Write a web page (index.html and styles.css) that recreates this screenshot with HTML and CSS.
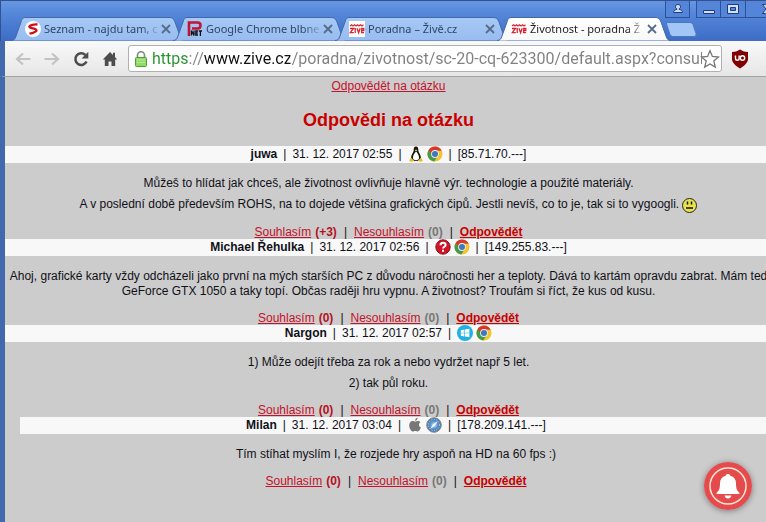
FILE: index.html
```
<!DOCTYPE html>
<html lang="cs">
<head>
<meta charset="utf-8">
<title>Životnost - poradna Živě.cz</title>
<link rel="stylesheet" href="styles.css">
</head>
<body>
<svg class="defs" aria-hidden="true">
  <defs>
    <linearGradient id="tab-idle" x2="0" y2="1"><stop offset="0" stop-color="#a6c9f5"/><stop offset="1" stop-color="#98bcf0"/></linearGradient>
    <linearGradient id="tab-active" x2="0" y2="1"><stop offset="0" stop-color="#fff"/><stop offset="1" stop-color="#f8f8f8"/></linearGradient>
    <radialGradient id="globe"><stop offset="0" stop-color="#a9d6f5"/><stop offset=".7" stop-color="#437fbf"/><stop offset="1" stop-color="#6b7c91"/></radialGradient>
    <symbol id="shape-tab" viewBox="0 0 174 24"><path d="M0 23.5C3 23.5 4 22 5 19L10 5C11 1.500 12 .5 15 .5H158C161 .5 162.500 1.500 164 5L169 19C170 22 171 23.500 174 23.500" stroke="#4168a8"/></symbol>
    <symbol id="x" viewBox="0 0 10 10"><path d="M1 1l8 8M9 1l-8 8" fill="none" stroke="currentColor" stroke-width="1.800"/></symbol>
    <symbol id="zive" viewBox="0 0 16 16"><path fill="#fff" d="M0 0h16v16H0z"/><path d="M1 5l1.500-1.200L4 5l1.500-1.200L7 5l1.500-1.200L10 5l1.500-1.200L13 5l1.500-1.200" fill="none" stroke="#d8232f" stroke-width="1.200"/><path d="M1 7.500h3.500L1.300 11.700h3.500M6.200 7v5M8 7.200l1.600 4.500 1.600-4.500M15 11.700h-2.300V7.500h2.100v2h-2" fill="none" stroke="#d8232f" stroke-width="1.300"/></symbol>
    <symbol id="chrome" viewBox="0 0 16 16"><circle cx="8" cy="8" r="7.500" fill="#f2c52d"/><path d="M1.500 4.200A7.500 7.500 0 0 1 14.700 4.700H8L4.900 9.500z" fill="#d6382d"/><path d="M1.500 4.200A7.500 7.500 0 0 0 7.300 15.500L10.900 9.800 7 11z" fill="#459b48"/><circle cx="8" cy="8" r="3.900" fill="#e9eef0"/><circle cx="8" cy="8" r="3" fill="#3f78bc"/></symbol>
    <symbol id="linux" viewBox="0 0 16 16"><path d="M8 .5C5.800.5 5.600 2.500 5.700 4.500 5.600 6.500 3 8.500 3 12c0 2 2 3 5 3s5-1 5-3c0-3.500-2.600-5.500-2.700-7.500C10.400 2.500 10.200.5 8 .5z" fill="#171717"/><path d="M7.500 6C6 8 5 9.500 5 12c0 1.500 1.500 2.200 3 2.200s3-.7 3-2.200c0-2.500-1-4-2.300-6z" fill="#fff"/><path d="M6.700 4.200L8 3.600l1.400.6L8 5.700z" fill="#edb91f"/><path d="M3 11.500l3 3c-.3 1.500-2.800 1.200-4.800.4zM13 11.500l-3 3c.3 1.500 2.800 1.200 4.800.4z" fill="#edb91f"/></symbol>
    <symbol id="unknown" viewBox="0 0 16 16"><circle cx="8" cy="8" r="7.200" fill="#cf1428" stroke="#8e1021"/><path d="M5.500 6.200C5.500 4.300 6.500 3.700 8 3.700s2.600.8 2.600 2.200C10.600 7.800 8 7.700 8 9.600" fill="none" stroke="#fff" stroke-width="2"/><path d="M7 10.800h2v2H7z" fill="#fff"/></symbol>
    <symbol id="windows" viewBox="0 0 16 16"><circle cx="8" cy="8" r="8" fill="#1fb0e6"/><path d="M3.800 5.200l3.600-.6v3.100H3.800zM8 4.500l4.400-.7v3.900H8zM3.800 8.300h3.600v3.100l-3.600-.6zM8 8.300h4.400v3.900L8 11.500z" fill="#fff"/></symbol>
    <symbol id="apple" viewBox="0 0 16 16"><path d="M10.600.8c.1 1.500-1 2.900-2.500 3C8 2.300 9.200 1 10.600.8zM8.300 4.700c.8 0 1.500-.7 2.700-.7 1 0 1.900.5 2.500 1.300-2.300 1.300-1.900 4.300.4 5.200-.6 1.700-1.900 4-3.200 4-.9 0-1.300-.6-2.400-.6s-1.500.6-2.400.6C4.200 14.500 2.200 11 2.200 8.400 2.200 5.700 3.900 4 5.700 4c1.100 0 1.900.7 2.600.7z" fill="#777"/></symbol>
    <symbol id="safari" viewBox="0 0 16 16"><circle cx="8" cy="8" r="7.300" fill="url(#globe)" stroke="#7c8793"/><circle cx="8" cy="8" r="5.500" fill="none" stroke="#cbe3f4" stroke-dasharray="1 1.500"/><path d="M12 4L9 9 4 12l3-5z" fill="#e8f2fa"/></symbol>
  </defs>
</svg>

<header class="browser">
  <div class="titlebar">
    <ul class="tabs">
      <li class="tab">
        <svg class="tab-shape"><use href="#shape-tab"/></svg>
        <svg class="favicon" viewBox="0 0 16 16"><circle cx="8" cy="8" r="8" fill="#fff"/><path d="M12.500 3.500C9 3.200 4.800 4 4.300 5.400 4 7.500 11.300 7.300 11.500 9.300 11.500 11 8 12 4.500 12.700" fill="none" stroke="#d40d14" stroke-width="2.300"/></svg>
        <a class="tab-title" href="#">Seznam - najdu tam, c</a>
        <button class="tab-close" aria-label="Zavřít"><svg><use href="#x"/></svg></button>
      </li>
      <li class="tab">
        <svg class="tab-shape"><use href="#shape-tab"/></svg>
        <svg class="favicon" viewBox="0 0 16 16"><path d="M2 15V1.500h8.500q3 0 3 3t-3 3H5" fill="none" stroke="#c41230" stroke-width="2.600"/><path d="M4.500 14.500v-5l2.500 5v-5M11 10H8.800v4H11M8.800 12h2M11.800 10H15M13.400 10v5" fill="none" stroke="#111" stroke-width="1.300"/></svg>
        <a class="tab-title" href="#">Google Chrome blbne.</a>
        <button class="tab-close" aria-label="Zavřít"><svg><use href="#x"/></svg></button>
      </li>
      <li class="tab">
        <svg class="tab-shape"><use href="#shape-tab"/></svg>
        <svg class="favicon"><use href="#zive"/></svg>
        <a class="tab-title" href="#">Poradna – Živě.cz</a>
        <button class="tab-close" aria-label="Zavřít"><svg><use href="#x"/></svg></button>
      </li>
      <li class="tab tab-current">
        <svg class="tab-shape"><use href="#shape-tab"/></svg>
        <svg class="favicon"><use href="#zive"/></svg>
        <a class="tab-title" href="#">Životnost - poradna Ž</a>
        <button class="tab-close" aria-label="Zavřít"><svg><use href="#x"/></svg></button>
      </li>
    </ul>
    <button class="new-tab" aria-label="Nová karta"><svg viewBox="0 0 31 15"><path d="M1.500.5H24q2 0 3 2l3 9q1 3-2 3H7q-2 0-3-2L.8 3Q0 .5 1.500.5z" fill="#a2c7f7" stroke="#4a78c0"/></svg></button>
    <div class="window-controls">
      <button class="control user" aria-label="Uživatel"><svg viewBox="0 0 12 12"><path d="M6 1.500a2.200 2.200 0 0 1 1.200 4.200v.8c2 .4 3.300 1.200 3.300 3H1.500c0-1.800 1.300-2.600 3.300-3v-.8A2.200 2.200 0 0 1 6 1.500z"/></svg></button>
      <button class="control" aria-label="Minimalizovat"><svg viewBox="0 0 12 12"><path d="M.5 7.500h11v3H.5z"/></svg></button>
      <button class="control" aria-label="Obnovit"><svg viewBox="0 0 12 12"><path d="M.5 1.500h11v9H.5zM3.500 4.500v3h5v-3z" fill-rule="evenodd"/></svg></button>
      <button class="control close" aria-label="Zavřít okno"><svg viewBox="0 0 12 12"><path d="M.5 1.500h3L6 4l2.500-2.500h3L8 6l3.500 4.500h-3L6 8l-2.500 2.500h-3L4 6z"/></svg></button>
    </div>
  </div>
  <nav class="toolbar">
    <button class="tool faded" aria-label="Zpět"><svg viewBox="0 0 16 16"><path d="M15.500 8H2M8 2.500L2 8l6 5.500" fill="none" stroke="currentColor" stroke-width="2.200"/></svg></button>
    <button class="tool faded" aria-label="Vpřed"><svg viewBox="0 0 16 16"><path d="M.5 8H14M8 2.500L14 8l-6 5.500" fill="none" stroke="currentColor" stroke-width="2.200"/></svg></button>
    <button class="tool" aria-label="Obnovit stránku"><svg viewBox="0 0 16 16"><path d="M12.300 4A5.800 5.800 0 1 0 13.500 10.500" fill="none" stroke="currentColor" stroke-width="2.600"/><path d="M15.300.8v6.700H8.600z" fill="currentColor"/></svg></button>
    <button class="tool" aria-label="Domů"><svg viewBox="0 0 16 16"><path d="M8 1L.8 8.500h2V15h3.700v-4.500h3V15h3.700V8.500h2L13 6V1.800h-2V4z" fill="currentColor"/></svg></button>
    <div class="address">
      <svg class="lock" viewBox="0 0 12 16"><path d="M2.500 7V4.200a3.500 3.500 0 0 1 7 0V7" fill="none" stroke="#7d8a7d" stroke-width="1.600"/><rect x=".5" y="6.500" width="11" height="9" rx="1" fill="#8fdb6a" stroke="#4c9e35"/><path d="M2 9h8M2 11.500h8" stroke="#b6eb9a"/></svg>
      <input class="url" type="text" aria-label="Adresa" spellcheck="false" value="https://www.zive.cz/poradna/zivotnost/sc-20-cq-623300/default.aspx?consul">
      <button class="star" aria-label="Záložka"><svg viewBox="0 0 20 20"><path d="M10 1.800l2.400 5.700 6.100.5-4.700 4 1.500 6.100L10 14.900l-5.300 3.200L6.200 12 1.500 8l6.100-.5z" fill="#fff" stroke="#777" stroke-width="1.300"/></svg></button>
    </div>
    <button class="shield" aria-label="uBlock"><svg viewBox="0 0 18 20"><path d="M9 .5c2.500 1.700 5 2.500 8 2.500v7c0 4-4 7-8 9.500C5 17 1 14 1 10V3C4 3 6.500 2.200 9 .5z" fill="#800000"/><path d="M4.500 6.500v3a1.800 1.800 0 0 0 3.600 0v-3" fill="none" stroke="#fff" stroke-width="1.400"/><circle cx="11.500" cy="9" r="2.200" fill="none" stroke="#fff" stroke-width="1.400"/></svg></button>
  </nav>
</header>

<main class="viewport">
  <div class="page">
    <p class="reply-top"><a href="#">Odpovědět na otázku</a></p>
    <h1>Odpovědi na otázku</h1>

    <article class="post">
      <div class="author"><b>juwa</b><i>|</i><span>31. 12. 2017 02:55</span><i>|</i><svg><use href="#linux"/></svg><svg><use href="#chrome"/></svg><i>|</i><span>[85.71.70.---]</span></div>
      <div class="text">
        <p>Můžeš to hlídat jak chceš, ale životnost ovlivňuje hlavně výr. technologie a použité materiály.</p>
        <p>A v poslední době především ROHS, na to dojede většina grafických čipů. Jestli nevíš, co to je, tak si to vygoogli. <svg class="smile" viewBox="0 0 15 15"><circle cx="7.500" cy="7.500" r="7" fill="#e9e34a" stroke="#222"/><path d="M5.500 3.500v3M9.500 3.500v3M4 10h7" stroke="#111" stroke-width="1.500"/></svg></p>
      </div>
      <div class="actions"><a href="#">Souhlasím</a><b class="plus">(+3)</b><i>|</i><a href="#">Nesouhlasím</a><b class="minus">(0)</b><i>|</i><a class="answer" href="#">Odpovědět</a></div>
    </article>

    <article class="post">
      <div class="author"><b>Michael Řehulka</b><i>|</i><span>31. 12. 2017 02:56</span><i>|</i><svg><use href="#unknown"/></svg><svg><use href="#chrome"/></svg><i>|</i><span>[149.255.83.---]</span></div>
      <div class="text">
        <p>Ahoj, grafické karty vždy odcházeli jako první na mých starších PC z důvodu náročnosti her a teploty. Dává to kartám opravdu zabrat. Mám ted<br>GeForce GTX 1050 a taky topí. Občas raději hru vypnu. A životnost? Troufám si říct, že kus od kusu.</p>
      </div>
      <div class="actions"><a href="#">Souhlasím</a><b class="plus">(0)</b><i>|</i><a href="#">Nesouhlasím</a><b class="minus">(0)</b><i>|</i><a class="answer" href="#">Odpovědět</a></div>
    </article>

    <article class="post">
      <div class="author"><b>Nargon</b><i>|</i><span>31. 12. 2017 02:57</span><i>|</i><svg><use href="#windows"/></svg><svg><use href="#chrome"/></svg></div>
      <div class="text">
        <p>1) Může odejít třeba za rok a nebo vydržet např 5 let.</p>
        <p>2) tak půl roku.</p>
      </div>
      <div class="actions"><a href="#">Souhlasím</a><b class="plus">(0)</b><i>|</i><a href="#">Nesouhlasím</a><b class="minus">(0)</b><i>|</i><a class="answer" href="#">Odpovědět</a></div>
    </article>

    <article class="post nested">
      <div class="author"><b>Milan</b><i>|</i><span>31. 12. 2017 03:04</span><i>|</i><svg><use href="#apple"/></svg><svg><use href="#safari"/></svg><i>|</i><span>[178.209.141.---]</span></div>
      <div class="text">
        <p>Tím stíhat myslím I, že rozjede hry aspoň na HD na 60 fps :)</p>
      </div>
      <div class="actions"><a href="#">Souhlasím</a><b class="plus">(0)</b><i>|</i><a href="#">Nesouhlasím</a><b class="minus">(0)</b><i>|</i><a class="answer" href="#">Odpovědět</a></div>
    </article>
  </div>
</main>

<button class="bell" aria-label="Oznámení"><svg viewBox="0 0 48 48"><circle cx="24" cy="24" r="24" fill="#e54b4d"/><circle cx="24" cy="24" r="18" fill="none" stroke="#ffe9d6" stroke-width="1.500"/><path d="M24 12c1.500 0 2.200.8 2.300 1.800C30 14.800 32 17.500 32 21c0 6 1 7.500 3.500 10v1h-23v-1C15 28.500 16 27 16 21c0-3.500 2-6.200 5.700-7.200.1-1 .8-1.800 2.300-1.800zM20.500 33.500h7c-.5 2-1.800 3-3.500 3s-3-1-3.500-3z" fill="#fff"/></svg></button>
</body>
</html>
```
FILE: styles.css
```
* {
  box-sizing: border-box;
}

body {
  margin: 0;
  min-height: 100vh;
  display: flex;
  flex-direction: column;
  overflow: hidden;
  background: #ccc;
  font: 12px/15px "Liberation Sans", Arial, sans-serif;
  color: #101018;
}

button {
  margin: 0;
  padding: 0;
  border: 0;
  background: none;
}

svg {
  display: block;
  flex: none;
}

.defs {
  position: absolute;
  width: 0;
  height: 0;
}

/* Window frame */
.titlebar {
  position: relative;
  display: flex;
  align-items: flex-end;
  height: 41px;
  overflow: hidden;
  padding-left: 10px;
  border-top: 1px solid #33518c;
  border-left: 1px solid #33518c;
  background: linear-gradient(#6797e2, #5385d8 35%, #3e6cc6);
}

.tabs {
  display: flex;
  margin: 0;
  padding: 0;
  list-style: none;
}

.tab {
  position: relative;
  display: flex;
  align-items: center;
  width: 174px;
  height: 24px;
  margin-right: -12px;
  padding: 0 14px;
  font: 11px/16px "Noto Sans", Tahoma, sans-serif;
}

.tab-shape {
  position: absolute;
  inset: 0;
  width: 100%;
  height: 100%;
  fill: url(#tab-idle);
}

.tab-current .tab-shape {
  fill: url(#tab-active);
}

.favicon {
  position: relative;
  width: 16px;
  height: 16px;
}

.tab-title {
  position: relative;
  flex: 1;
  margin-left: 3px;
  overflow: hidden;
  white-space: nowrap;
  color: #2f4568;
  text-decoration: none;
  mask-image: linear-gradient(to left, transparent, #000 20px);
}

.tab-current .tab-title {
  color: #222;
}

.tab-close {
  position: relative;
  color: #566b8c;
}

.tab-close svg {
  width: 10px;
  height: 10px;
}

.new-tab {
  margin: 0 0 4px 7px;
}

.new-tab svg {
  width: 31px;
  height: 15px;
}

/* Floats over the tab strip, flush with the top edge */
.window-controls {
  position: absolute;
  top: 0;
  right: -24px;
  display: flex;
}

.control {
  display: grid;
  place-items: center;
  width: 25px;
  height: 17px;
  border: 1px solid #2c519b;
  border-top: 0;
  border-left-width: 0;
  background: #5585d8;
}

.control svg {
  width: 12px;
  height: 12px;
  fill: #cfe0fa;
  stroke: #1f3a78;
}

.control.user {
  border-left-width: 1px;
  margin-right: 6px;
}

.control.user + .control {
  border-left-width: 1px;
}

.control.close {
  width: 44px;
}

/* Navigation bar */
.toolbar {
  display: flex;
  align-items: center;
  height: 36px;
  padding: 0 17px 0 10px;
  border-left: 5px solid #4468ae;
  border-bottom: 1px solid #a3a3a3;
  background: linear-gradient(#f9f9f9, #e6e6e6);
}

.tool {
  margin-right: 13px;
  color: #4d4d4d;
}

.tool.faded {
  color: #c3c3c3;
}

.tool svg {
  width: 16px;
  height: 16px;
}

.address {
  display: flex;
  flex: 1;
  align-items: center;
  min-width: 0;
  height: 27px;
  margin: 0 9px 0 -3px;
  padding: 0 1px 0 6px;
  border: 1px solid #b0b0b0;
  border-radius: 3px;
  background: #fff;
}

.lock {
  width: 12px;
  height: 16px;
}

.url {
  flex: 1;
  min-width: 0;
  height: 25px;
  margin: 0 -2px 0 5px;
  padding: 0;
  border: 0;
  outline: 0;
  background: linear-gradient(to right, #26922a 36px, #858585 36px 52px, #111 52px 138px, #808080 138px);
  background-clip: text;
  -webkit-text-fill-color: transparent;
  font: 16px/25px Roboto, Tahoma, sans-serif;
}

.star svg {
  width: 20px;
  height: 20px;
}

.shield svg {
  width: 18px;
  height: 20px;
}

/* Discussion */
.viewport {
  flex: 1;
  overflow: hidden;
  border-left: 5px solid #4468ae;
}

.page {
  margin-right: -6px;
  text-align: center;
}

p {
  margin: 0;
}

a {
  color: #c4122a;
}

.reply-top {
  padding-top: 2px;
}

h1 {
  margin: 15px 0;
  font-size: 18px;
  line-height: 22px;
  color: #c80000;
}

.post.nested {
  margin-left: 15px;
}

.author,
.actions {
  display: flex;
  justify-content: center;
}

.author {
  height: 17px;
  gap: 6px;
  line-height: 17px;
  background: #f8f8f8;
}

.author svg {
  width: 16px;
  height: 16px;
}

.author svg + svg {
  margin-left: -3px;
}

i {
  font-style: normal;
}

.text {
  display: flex;
  flex-direction: column;
  gap: 6px;
  padding: 13px 0 12px;
  white-space: nowrap;
}

.smile {
  display: inline-block;
  width: 15px;
  height: 15px;
  vertical-align: -5px;
}

.actions {
  height: 14px;
}

.actions i {
  margin: 0 7px;
}

.actions b {
  margin-left: 4px;
}

.plus {
  color: #b5121f;
}

.minus {
  color: #777;
}

.answer {
  font-weight: bold;
  color: #c80000;
}

.bell {
  position: fixed;
  right: 14px;
  bottom: 12px;
  border-radius: 50%;
  box-shadow: 0 1px 6px rgba(0, 0, 0, .4);
}

.bell svg {
  width: 48px;
  height: 48px;
}
```
